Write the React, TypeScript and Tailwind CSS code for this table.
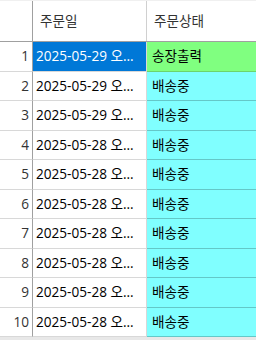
import React from 'react';

type Row = { no: number; date: string; status: string };

const ROWS: Row[] = [
  { no: 1, date: '2025-05-29 오후 3:42:10', status: '송장출력' },
  { no: 2, date: '2025-05-29 오후 2:15:33', status: '배송중' },
  { no: 3, date: '2025-05-29 오전 9:08:51', status: '배송중' },
  { no: 4, date: '2025-05-28 오후 6:20:04', status: '배송중' },
  { no: 5, date: '2025-05-28 오후 4:11:47', status: '배송중' },
  { no: 6, date: '2025-05-28 오후 2:56:12', status: '배송중' },
  { no: 7, date: '2025-05-28 오전 11:30:29', status: '배송중' },
  { no: 8, date: '2025-05-28 오전 10:02:18', status: '배송중' },
  { no: 9, date: '2025-05-28 오전 9:44:55', status: '배송중' },
  { no: 10, date: '2025-05-28 오전 8:17:36', status: '배송중' },
];

const font = { fontFamily: '"Open Sans", "Noto Sans CJK KR", sans-serif' };

export default function App() {
  return (
    <div className="w-[256px] h-[340px] overflow-hidden bg-white text-[13.6px] text-[#1a1a1a] flex flex-col" style={font}>
      <div className="h-[1px] bg-[#f0f0f0]" />
      {/* header */}
      <div className="flex h-[41px] shrink-0 border-b border-[#a0a0a0]">
        <div className="w-[33px] shrink-0 border-r border-[#a0a0a0]" />
        <div className="w-[114px] shrink-0 border-r border-[#d0d0d0] flex items-center pl-[7px] text-[#333]">주문일</div>
        <div className="flex-1 flex items-center pl-[7px] text-[#333]">주문상태</div>
      </div>
      {ROWS.map((r) => {
        const first = r.no === 1;
        return (
          <div key={r.no} className="flex h-[29.5px] shrink-0">
            <div className="w-[33px] shrink-0 border-r border-b border-[#a0a0a0] border-b-[#d8d8d8] flex items-center justify-end pr-[3px] text-[#333]">
              {r.no}
            </div>
            <div
              className={`w-[114px] shrink-0 border-r border-b border-[#d8d8d8] flex items-center pl-[3px] pr-[4px] min-w-0 ${
                first ? 'bg-[#0078d7] text-white' : 'bg-white text-black'
              }`}
            >
              <span className="truncate">{r.date}</span>
            </div>
            <div
              className={`flex-1 border-b flex items-center pl-[5px] text-black ${
                first ? 'bg-[#80ff80] border-[#6cd46c]' : 'bg-[#80ffff] border-[#64c8c8]'
              }`}
            >
              {r.status}
            </div>
          </div>
        );
      })}
      <div className="flex-1 bg-[#e8e8e8]" />
    </div>
  );
}
